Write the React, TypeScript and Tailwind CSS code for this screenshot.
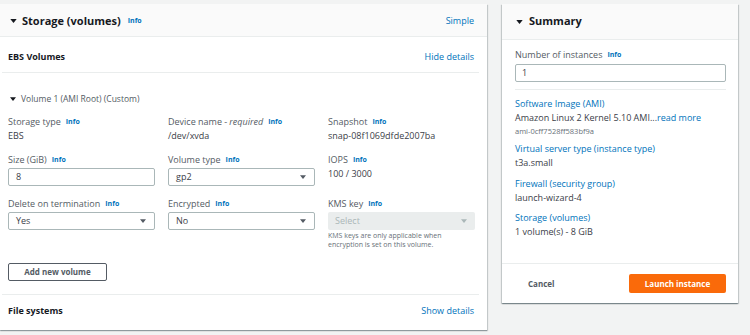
import React from 'react';

const Caret = ({ className = '' }: { className?: string }) => (
  <svg viewBox="0 0 8 5" className={className}>
    <path d="M0 0h8L4 5z" fill="currentColor" />
  </svg>
);

const Info = () => <span className="ml-[5px] text-[7px] font-bold text-[#0073bb]">Info</span>;

const Label = ({ children, info = true }: { children: React.ReactNode; info?: boolean }) => (
  <div className="flex h-[12px] items-center text-[9px] leading-[12px] text-[#545b64]">
    {children}
    {info && <Info />}
  </div>
);

const Value = ({ children }: { children: React.ReactNode }) => (
  <div className="mt-[2px] h-[12px] text-[9px] leading-[12px] text-[#3b4048]">{children}</div>
);

const Input = ({ value }: { value: string }) => (
  <div className="mt-[2px] flex h-[18px] items-center rounded-[2px] border border-[#aab7b8] bg-white px-[7px] text-[9px] text-[#3b4048]">
    {value}
  </div>
);

const Select = ({ value }: { value: string }) => (
  <div className="mt-[2px] flex h-[18px] items-center justify-between rounded-[2px] border border-[#aab7b8] bg-white pl-[7px] pr-[8px] text-[9px] text-[#3b4048]">
    {value}
    <Caret className="h-[4px] w-[6px] text-[#545b64]" />
  </div>
);

const SummaryItem = ({ title, children, className = '' }: { title: string; children: React.ReactNode; className?: string }) => (
  <div className={className}>
    <div className="h-[12px] text-[9px] leading-[12px] text-[#0073bb]">{title}</div>
    {children}
  </div>
);

export default function App() {
  return (
    <div className="flex h-[335px] w-[750px] items-start bg-[#f2f3f3] font-['Open_Sans',sans-serif]">
      {/* Storage panel */}
      <div className="mt-[4px] flex h-[326px] w-[487px] flex-col bg-white shadow-[0_1px_1px_0_rgba(0,28,36,0.3),1px_1px_1px_0_rgba(0,28,36,0.15)]">
        <div className="flex h-[33px] items-center justify-between border-b border-[#eaeded] bg-[#fafafa] pl-[10px] pr-[13px] pt-[2px]">
          <div className="flex items-center">
            <Caret className="h-[4px] w-[7px] text-[#16191f]" />
            <span className="ml-[5px] text-[11px] font-bold text-[#16191f]">Storage (volumes)</span>
            <span className="ml-[7px] text-[7px] font-bold text-[#0073bb]">Info</span>
          </div>
          <span className="text-[9px] text-[#0073bb]">Simple</span>
        </div>

        <div className="flex h-[35px] items-center justify-between pl-[8px] pr-[13px] pt-[4px]">
          <span className="text-[9px] font-bold text-[#16191f]">EBS Volumes</span>
          <span className="text-[9px] text-[#0073bb]">Hide details</span>
        </div>
        <div className="ml-[2px] mr-[8px] h-px bg-[#eaeded]" />

        <div className="flex h-[221px] flex-col pl-[8px] pt-[20px]">
          <div className="flex h-[12px] items-center pl-[2px]">
            <Caret className="h-[4px] w-[6px] text-[#16191f]" />
            <span className="ml-[5px] text-[8.5px] text-[#545b64]">Volume 1 (AMI Root) (Custom)</span>
          </div>

          <div className="mt-[11px] grid grid-cols-[147px_147px_147px] gap-x-[13px] gap-y-[12px]">
            <div>
              <Label>Storage type</Label>
              <Value>EBS</Value>
            </div>
            <div>
              <Label>
                Device name - <span className="ml-[2px] italic">required</span>
              </Label>
              <Value>/dev/xvda</Value>
            </div>
            <div>
              <Label>Snapshot</Label>
              <Value>snap-08f1069dfde2007ba</Value>
            </div>

            <div>
              <Label>Size (GiB)</Label>
              <Input value="8" />
            </div>
            <div>
              <Label>Volume type</Label>
              <Select value="gp2" />
            </div>
            <div>
              <Label>IOPS</Label>
              <Value>100 / 3000</Value>
            </div>

            <div>
              <Label>Delete on termination</Label>
              <Select value="Yes" />
            </div>
            <div>
              <Label>Encrypted</Label>
              <Select value="No" />
            </div>
            <div>
              <Label>KMS key</Label>
              <div className="mt-[2px] flex h-[18px] items-center justify-between rounded-[2px] bg-[#eaeded] pl-[7px] pr-[8px] text-[9px] text-[#aab7b8]">
                Select
                <Caret className="h-[4px] w-[6px] text-[#aab7b8]" />
              </div>
              <div className="mt-[1px] text-[7px] leading-[9px] text-[#687078]">
                KMS keys are only applicable when
                <br />
                encryption is set on this volume.
              </div>
            </div>
          </div>

          <div className="mt-[14px] flex h-[18px] w-[99px] items-center justify-center rounded-[2px] border border-[#545b64] text-[8px] font-bold text-[#545b64]">
            Add new volume
          </div>
        </div>

        <div className="ml-[2px] mr-[8px] h-px bg-[#eaeded]" />
        <div className="flex h-[35px] items-center justify-between pb-[4px] pl-[8px] pr-[13px]">
          <span className="text-[9px] font-bold text-[#16191f]">File systems</span>
          <span className="text-[9px] text-[#0073bb]">Show details</span>
        </div>
      </div>

      {/* Summary panel */}
      <div className="ml-[15px] mt-[4px] flex h-[299px] w-[236px] flex-col bg-white shadow-[0_1px_1px_0_rgba(0,28,36,0.3),1px_1px_1px_0_rgba(0,28,36,0.15),-1px_1px_1px_0_rgba(0,28,36,0.15)]">
        <div className="flex h-[36px] items-center border-b border-[#eaeded] bg-[#fafafa] pl-[14px]">
          <Caret className="h-[4px] w-[7px] text-[#16191f]" />
          <span className="ml-[6px] text-[11px] font-bold text-[#16191f]">Summary</span>
        </div>

        <div className="flex flex-1 flex-col pl-[13px] pr-[12px] pt-[9px]">
          <Label>Number of instances</Label>
          <div className="mt-[3px] flex h-[18px] items-center rounded-[2px] border border-[#aab7b8] px-[6px] text-[9px] text-[#3b4048]">
            1
          </div>
          <div className="mt-[7px] h-px bg-[#eaeded]" />

          <SummaryItem title="Software Image (AMI)" className="mt-[8px]">
            <div className="mt-[2px] h-[12px] text-[9px] leading-[12px] text-[#3b4048]">
              Amazon Linux 2 Kernel 5.10 AMI...<span className="text-[#0073bb]">read more</span>
            </div>
            <div className="mt-[2px] h-[10px] text-[7.5px] leading-[10px] text-[#687078]">ami-0cff7528ff583bf9a</div>
          </SummaryItem>

          <SummaryItem title="Virtual server type (instance type)" className="mt-[7px]">
            <Value>t3a.small</Value>
          </SummaryItem>

          <SummaryItem title="Firewall (security group)" className="mt-[9px]">
            <Value>launch-wizard-4</Value>
          </SummaryItem>

          <SummaryItem title="Storage (volumes)" className="mt-[8px]">
            <Value>1 volume(s) - 8 GiB</Value>
          </SummaryItem>
        </div>

        <div className="flex h-[40px] items-center justify-between border-t border-[#eaeded] pl-[26px] pr-[12px]">
          <span className="text-[8px] font-bold text-[#545b64]">Cancel</span>
          <div className="flex h-[19px] w-[97px] items-center justify-center rounded-[2px] bg-[#fa6a0a] text-[8px] font-bold text-white">
            Launch instance
          </div>
        </div>
      </div>
    </div>
  );
}
